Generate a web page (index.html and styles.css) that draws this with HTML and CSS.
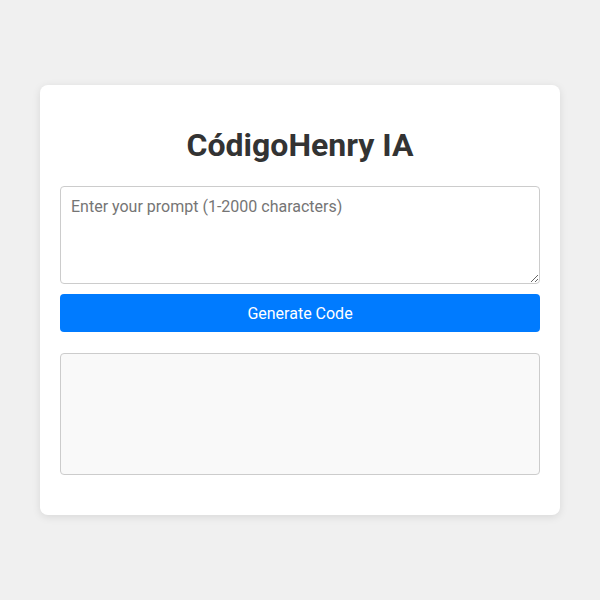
FILE: index.html
```html
<!DOCTYPE html>
<html lang="es">
<head>
<meta charset="utf-8">
<title>CódigoHenry IA</title>
<link rel="stylesheet" href="styles.css">
</head>
<body>
<div class="card">
  <h1 class="title">CódigoHenry IA</h1>
  <textarea class="prompt" placeholder="Enter your prompt (1-2000 characters)"></textarea>
  <button class="generate">Generate Code</button>
  <div class="output"></div>
</div>
</body>
</html>
```
FILE: styles.css
```css
html, body {
  margin: 0;
  padding: 0;
}
body {
  background: #f0f0f0;
  font-family: Roboto, "Liberation Sans", sans-serif;
  height: 600px;
  display: flex;
  align-items: center;
  justify-content: center;
}
.card {
  width: 520px;
  height: 430px;
  box-sizing: border-box;
  background: #fff;
  border-radius: 8px;
  box-shadow: 0 2px 8px rgba(0,0,0,0.1);
  padding: 20px;
  display: flex;
  flex-direction: column;
}
.title {
  font-size: 32px;
  font-weight: 700;
  color: #333;
  text-align: center;
  margin: 22px 0 22px;
  line-height: 37px;
}
.prompt {
  display: block;
  width: 100%;
  height: 98px;
  box-sizing: border-box;
  padding: 10px;
  border: 1px solid #ccc;
  border-radius: 4px;
  font-family: Roboto, "Liberation Sans", sans-serif;
  font-size: 16px;
  color: #333;
  resize: vertical;
  margin: 0;
}
.prompt::placeholder {
  color: #757575;
}
.generate {
  display: block;
  width: 100%;
  height: 38px;
  margin-top: 10px;
  border: none;
  border-radius: 4px;
  background: #007bff;
  color: #fff;
  font-family: Roboto, "Liberation Sans", sans-serif;
  font-size: 16px;
  cursor: pointer;
}
.output {
  margin-top: 21px;
  height: 122px;
  box-sizing: border-box;
  background: #f9f9f9;
  border: 1px solid #ccc;
  border-radius: 4px;
}
```
